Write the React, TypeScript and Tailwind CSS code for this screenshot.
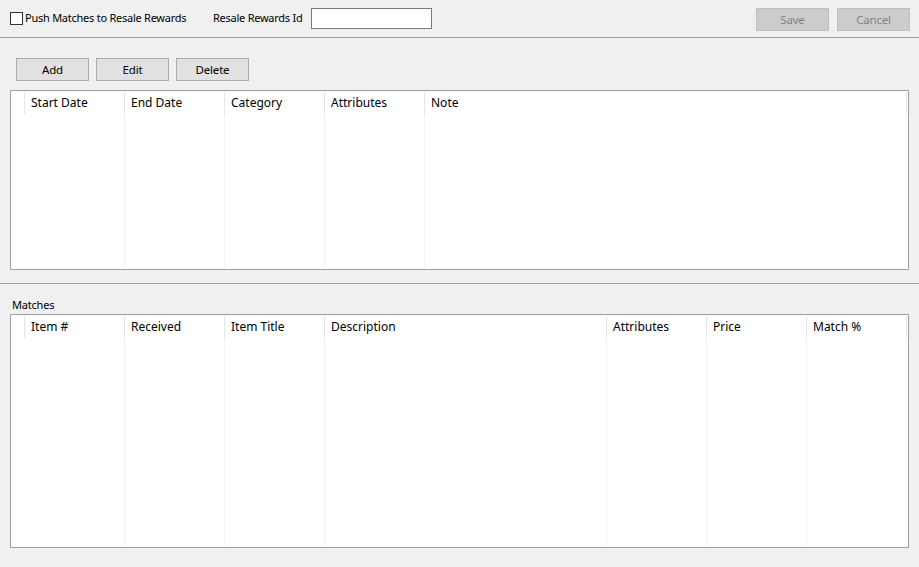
import React from 'react'

const FONT = { fontFamily: '"Noto Sans", "Liberation Sans", sans-serif' }

type Col = { label: string; width?: number }

const RULES: Col[] = [
  { label: 'Start Date', width: 100 },
  { label: 'End Date', width: 100 },
  { label: 'Category', width: 100 },
  { label: 'Attributes', width: 100 },
  { label: 'Note', width: 482 },
]

const MATCHES: Col[] = [
  { label: 'Item #', width: 100 },
  { label: 'Received', width: 100 },
  { label: 'Item Title', width: 100 },
  { label: 'Description', width: 282 },
  { label: 'Attributes', width: 100 },
  { label: 'Price', width: 100 },
  { label: 'Match %', width: 100 },
]

function Btn({ label, disabled }: { label: string; disabled?: boolean }) {
  return (
    <div
      className={`w-[73px] h-[23px] flex items-center justify-center text-[11.5px] tracking-[-0.2px] border ${
        disabled ? 'bg-[#cccccc] border-[#bfbfbf] text-[#838383]' : 'bg-[#e1e1e1] border-[#adadad] text-black'
      }`}
    >
      {label}
    </div>
  )
}

function Grid({ cols, height }: { cols: Col[]; height: number }) {
  return (
    <div className="mx-[10px] w-[899px] border border-[#a0a0a0] bg-white flex" style={{ height }}>
      <div className="w-[14px] flex flex-col shrink-0">
        <div className="h-[22px] border-r border-[#e5e5e5] mt-[1px]" />
      </div>
      {cols.map((c, i) => {
        const last = i === cols.length - 1
        return (
          <div key={c.label} className="flex flex-col shrink-0" style={{ width: c.width }}>
            <div className="h-[22px] mt-[1px] border-r border-[#e5e5e5] pl-[6px] flex items-center text-[12px] text-black">
              {c.label}
            </div>
            <div className={`flex-1 mb-[2px] ${last ? '' : 'border-r border-dotted border-[#e6e6e6]'}`} />
          </div>
        )
      })}
    </div>
  )
}

export default function App() {
  return (
    <div className="w-[919px] h-[567px] bg-[#f0f0f0] text-black overflow-hidden" style={FONT}>
      <div className="h-[38px] flex items-center pl-[10px] pr-[9px] border-b border-[#a0a0a0]">
        <div className="w-[203px] flex items-center shrink-0">
          <div className="w-[13px] h-[13px] border border-[#333] bg-white" />
          <span className="ml-[2px] text-[11px] tracking-[-0.25px] whitespace-nowrap">Push Matches to Resale Rewards</span>
        </div>
        <span className="w-[98px] shrink-0 text-[11px] tracking-[-0.25px] whitespace-nowrap">Resale Rewards Id</span>
        <div className="w-[121px] h-[21px] -mt-[1px] border border-[#7a7a7a] bg-white" />
        <div className="ml-auto mt-[2px] flex gap-[8px]">
          <Btn label="Save" disabled />
          <Btn label="Cancel" disabled />
        </div>
      </div>

      <div className="flex gap-[7px] pl-[16px] pt-[20px] pb-[9px]">
        <Btn label="Add" />
        <Btn label="Edit" />
        <Btn label="Delete" />
      </div>
      <Grid cols={RULES} height={180} />

      <div className="mt-[13px] border-b border-[#a0a0a0]" />

      <div className="pl-[12px] pt-[13px] h-[30px] text-[11px] tracking-[-0.2px]">Matches</div>
      <Grid cols={MATCHES} height={234} />
    </div>
  )
}
